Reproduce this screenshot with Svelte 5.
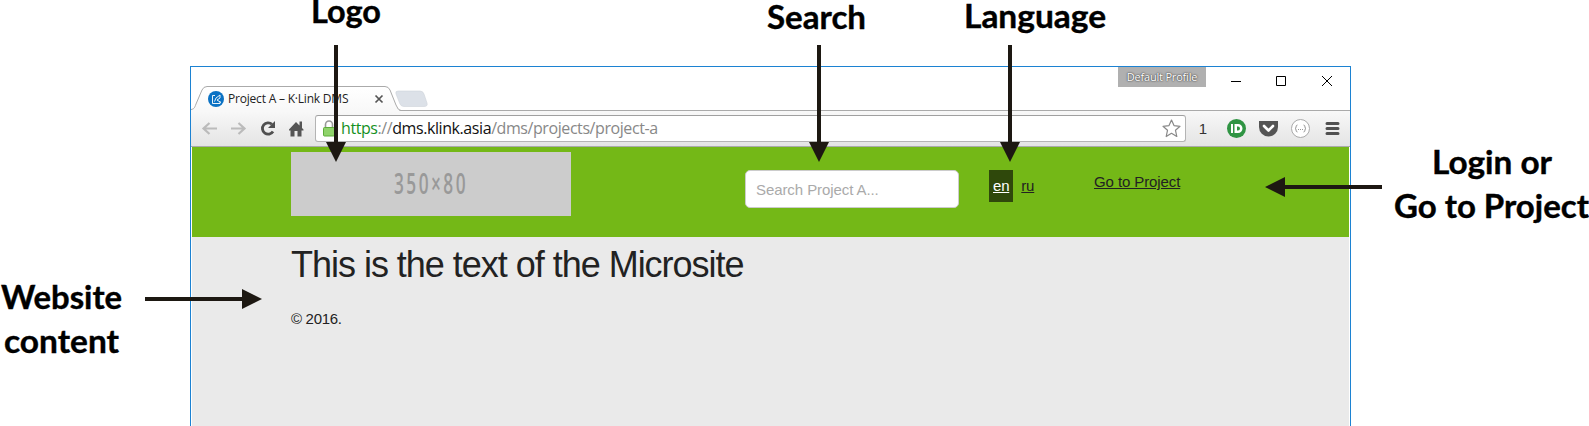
<script>
  const callouts = [
    { text: 'Logo', x: 311, y: 23, w: 70 },
    { text: 'Search', x: 767, y: 29, w: 99 },
    { text: 'Language', x: 964, y: 28, w: 142 },
    { text: 'Login or', x: 1432, y: 174, w: 120 },
    { text: 'Go to Project', x: 1394, y: 218, w: 195 },
    { text: 'Website', x: 1, y: 309, w: 121 },
    { text: 'content', x: 4, y: 353, w: 115 }
  ];
  const arrows = [
    'M334 45H338V142H346L336 162L326 142H334Z',
    'M817 45H821V142H829L819 162L809 142H817Z',
    'M1008 45H1012V142H1020L1010 162L1000 142H1008Z',
    'M1382 185H1285V177L1265 187L1285 197V189H1382Z',
    'M145 297H242V289L262 299L242 309V301H145Z'
  ];
</script>

<div class="stage">
  <div class="window">
    <div class="tabstrip">
      <svg class="tabs" width="240" height="44" viewBox="0 0 240 44">
        <defs>
          <linearGradient id="tab" x1="0" y1="0" x2="0" y2="1"><stop offset="0" stop-color="#fff" /><stop offset="1" stop-color="#f8f8f8" /></linearGradient>
        </defs>
        <path d="M0 42.500C3 42 3.500 41 5 37L11 23Q12.500 19.500 16 19.500H194Q197.500 19.500 199 23L205 38Q207 43.500 210 43.500V44H0Z" fill="url(#tab)" stroke="#aaa" />
        <path d="M0 43.500H208" stroke="#f8f8f8" />
        <path d="M207 24H229Q232 24 233 27L236 36Q237 39.500 233 39.500H213Q210 39.500 209 37L205 27Q204 24 207 24Z" fill="#dce1e8" stroke="#cfd4da" stroke-width=".6" />
        <circle cx="25" cy="32" r="8" fill="#0b72c4" />
        <path d="M24 28.500H21.500V36.500H29V34.500M23.500 34.500L25 31L29 28V31L26 33L30 35.500" fill="none" stroke="#fff" stroke-width=".9" />
        <path d="M184.500 28.500L191.500 35.500M191.500 28.500L184.500 35.500" stroke="#555" stroke-width="1.700" />
      </svg>
      <span class="tabtitle">Project A – K·Link DMS</span>
      <span class="profile">Default Profile</span>
      <svg class="controls" width="144" height="30" viewBox="0 0 144 30" fill="none" stroke="#000">
        <path d="M25 14.500H35M70.500 9.500H79.500V18.500H70.500ZM116 9L126 19M126 9L116 19" />
      </svg>
    </div>
    <div class="toolbar">
      <svg class="nav" width="123" height="35" viewBox="0 0 123 35" fill="none">
        <path d="M26 17.500H13M18.500 12L12.500 17.500L18.500 23M40 17.500H53M47.500 12L53.500 17.500L47.500 23" stroke="#bbb" stroke-width="2.200" />
        <path d="M82 20.500A5.700 5.700 0 1 1 81 13.300" stroke="#505050" stroke-width="2.800" />
        <path d="M84 10V17H77Z" fill="#505050" />
        <path d="M98 18.500L105 11L108.500 14.500V10.500H111V17L112.500 18.500V19.500H110.500V25.500H106.500V20H103.500V25.500H99.500V19.500H98Z" fill="#555" />
      </svg>
      <div class="omnibox">
        <svg width="12" height="17" viewBox="0 0 12 17">
          <path d="M2.500 8V4.500A3.500 3.500 0 0 1 9.500 4.500V8" fill="none" stroke="#999" stroke-width="1.600" />
          <rect x=".5" y="7.500" width="11" height="8.500" rx="1" fill="#8fd36a" stroke="#5eac3b" />
        </svg>
        <span class="url"><b>https</b><i>://</i>dms.klink.asia<i>/dms/projects/project-a</i></span>
        <svg class="star" width="19" height="19" viewBox="0 0 19 19"><path d="M9.500 1L12 6.600L18 7.300L13.500 11.300L14.800 17.500L9.500 14.300L4.200 17.500L5.500 11.300L1 7.300L7 6.600Z" fill="#fff" stroke="#888" stroke-width="1.200" stroke-linejoin="round" /></svg>
      </div>
      <span class="count">1</span>
      <svg class="ext" width="130" height="35" viewBox="0 0 130 35">
        <circle cx="16.500" cy="17.500" r="9.500" fill="#2f9443" />
        <path d="M11 13H13V22H11ZM14.500 13H18A4.500 4.500 0 0 1 18 22H14.500Z" fill="#fff" />
        <path d="M17 15.500V19.500H18A2 2 0 0 0 18 15.500Z" fill="#2f9443" />
        <path d="M39 10H58V16A9.500 9.500 0 0 1 39 16Z" fill="#555" />
        <path d="M44 15L48.500 19.500L53 15" fill="none" stroke="#fff" stroke-width="2.600" stroke-linecap="round" stroke-linejoin="round" />
        <circle cx="80.500" cy="17.500" r="9" fill="#fff" stroke="#aaa" />
        <path d="M77.500 14Q76 14 76 16Q76 17.500 75 17.500Q76 17.500 76 19Q76 21 77.500 21M83.500 14Q85 14 85 16Q85 17.500 86 17.500Q85 17.500 85 19Q85 21 83.500 21" fill="none" stroke="#999" />
        <path d="M78 18.500H83" stroke="#999" stroke-dasharray="1 1" />
        <path d="M107 12.500H118M107 17.500H118M107 22.500H118" stroke="#505050" stroke-width="3" stroke-linecap="round" />
      </svg>
    </div>
    <div class="site">
      <header>
        <svg class="logo" width="280" height="64" viewBox="0 0 280 64">
          <rect width="280" height="64" fill="#ccc" />
          <text x="103" y="42" textLength="74" lengthAdjust="spacingAndGlyphs">350×80</text>
        </svg>
        <div class="search">Search Project A...</div>
        <nav><span class="lang active">en</span><span class="lang">ru</span></nav>
        <span class="go">Go to Project</span>
      </header>
      <main>
        <h1>This is the text of the Microsite</h1>
        <p>© 2016.</p>
      </main>
    </div>
  </div>
  <svg class="callouts" width="1589" height="426" viewBox="0 0 1589 426">
    {#each arrows as d}<path {d} fill="#1d1812" />{/each}
    {#each callouts as c}
      <text x={c.x} y={c.y} textLength={c.w} lengthAdjust="spacingAndGlyphs">{c.text}</text>
    {/each}
  </svg>
</div>

<style>
  :global(body) { margin: 0; overflow: hidden; background: #fff; }
  .stage { position: relative; width: 1589px; height: 426px; overflow: hidden; padding: 66px 0 0 190px; box-sizing: border-box; font-family: "Liberation Sans", Arial, sans-serif; }
  .callouts { position: absolute; inset: 0; }
  .callouts text { font: 700 32px Lato, sans-serif; fill: #000; stroke: #000; stroke-width: .4px; }
  .window { width: 1161px; height: 370px; box-sizing: border-box; border: 1px solid #1c82d2; display: flex; flex-direction: column; }
  .tabstrip { position: relative; height: 44px; flex: none; display: flex; justify-content: flex-end; align-items: flex-start; box-sizing: border-box; border-bottom: 1px solid #aaa; font-family: "Open Sans", "Noto Sans", sans-serif; }
  .tabs { position: absolute; left: 0; top: 0; }
  .tabtitle { position: absolute; left: 37px; top: 23px; font-size: 12px; line-height: 17px; letter-spacing: -.2px; color: #222; white-space: nowrap; }
  .profile { width: 88px; height: 20px; background: #b0b0b0; color: #fff; font-size: 11px; line-height: 19px; text-align: center; letter-spacing: -.2px; text-shadow: 0 0 2px #333, 0 0 1px #555; white-space: nowrap; }
  .controls { flex: none; }
  .toolbar { height: 36px; flex: none; box-sizing: border-box; border-bottom: 1px solid #aaa; background: linear-gradient(#f8f8f8, #e4e4e4); display: flex; align-items: flex-start; }
  .nav, .ext { flex: none; }
  .omnibox { width: 871px; height: 27px; margin: 4px 0 0 1px; flex: none; box-sizing: border-box; border: 1px solid #b4b4b4; border-top-color: #a0a0a0; border-radius: 3px; background: #fff; display: flex; align-items: center; padding: 0 4px 0 7px; }
  .url { flex: 1; font: 16px/23px "Open Sans", "Noto Sans", sans-serif; margin: -1px 0 0 6px; color: #111; white-space: nowrap; letter-spacing: -.42px; }
  .url b { font-weight: 400; color: #16911f; }
  .url i { font-style: normal; color: #888; }
  .count { width: 34px; text-align: center; font: 15px/35px "Liberation Sans", sans-serif; color: #333; flex: none; }
  .site { flex: 1; margin: 0 1px; background: #eaeaea; color: #222; }
  header { height: 90px; background: #74b817; display: flex; align-items: flex-start; box-sizing: border-box; padding: 5px 0 0 99px; font-size: 15px; }
  .logo text { font: 600 28px "Liberation Sans Narrow", "Open Sans", sans-serif; letter-spacing: 4px; fill: #999; }
  .search { width: 214px; height: 38px; margin: 18px 0 0 174px; box-sizing: border-box; border: 1px solid #ccc; border-radius: 5px; background: #fff; color: #aaa; padding-left: 10px; line-height: 38px; letter-spacing: -.08px; }
  nav { display: flex; margin: 18px 0 0 30px; width: 105px; }
  .lang { height: 32px; padding: 0 4px; line-height: 32px; text-decoration: underline; letter-spacing: -.2px; }
  .active { background: #2f480b; color: #fff; margin-right: 4px; }
  .go { line-height: 20px; margin-top: 20px; text-decoration: underline; letter-spacing: -.1px; }
  main { padding: 5px 0 0 99px; }
  h1 { margin: 0; font-size: 36px; line-height: 45px; font-weight: 400; letter-spacing: -1.020px; }
  p { margin: 22px 0 0; font-size: 15px; line-height: 20px; letter-spacing: -.3px; }
</style>
